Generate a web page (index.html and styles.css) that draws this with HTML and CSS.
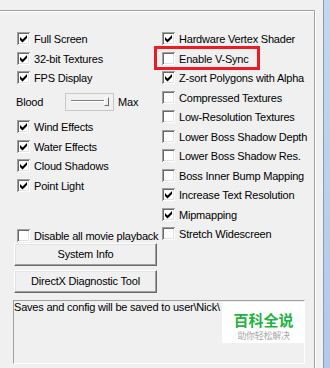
FILE: index.html
```html
<!DOCTYPE html>
<html>
<head>
<meta charset="utf-8">
<link rel="stylesheet" href="styles.css">
</head>
<body>
<div class="frame">
  <div class="group">
    <div class="cols">
      <div class="col left">
        <div class="row"><span class="cb"><svg viewBox="0 0 13 13"><path d="M3 5 L5.5 7.5 L10 3 L10 6 L5.5 10.5 L3 8 Z"/></svg></span><span class="lbl">Full Screen</span></div>
        <div class="row"><span class="cb"><svg viewBox="0 0 13 13"><path d="M3 5 L5.5 7.5 L10 3 L10 6 L5.5 10.5 L3 8 Z"/></svg></span><span class="lbl">32-bit Textures</span></div>
        <div class="row"><span class="cb"><svg viewBox="0 0 13 13"><path d="M3 5 L5.5 7.5 L10 3 L10 6 L5.5 10.5 L3 8 Z"/></svg></span><span class="lbl">FPS Display</span></div>
        <div class="blood">
          <span class="blood-lbl">Blood</span>
          <span class="slider"><span class="track"></span><span class="thumb"></span></span>
          <span class="max">Max</span>
        </div>
        <div class="row"><span class="cb"><svg viewBox="0 0 13 13"><path d="M3 5 L5.5 7.5 L10 3 L10 6 L5.5 10.5 L3 8 Z"/></svg></span><span class="lbl">Wind Effects</span></div>
        <div class="row"><span class="cb"><svg viewBox="0 0 13 13"><path d="M3 5 L5.5 7.5 L10 3 L10 6 L5.5 10.5 L3 8 Z"/></svg></span><span class="lbl">Water Effects</span></div>
        <div class="row"><span class="cb"><svg viewBox="0 0 13 13"><path d="M3 5 L5.5 7.5 L10 3 L10 6 L5.5 10.5 L3 8 Z"/></svg></span><span class="lbl">Cloud Shadows</span></div>
        <div class="row"><span class="cb"><svg viewBox="0 0 13 13"><path d="M3 5 L5.5 7.5 L10 3 L10 6 L5.5 10.5 L3 8 Z"/></svg></span><span class="lbl">Point Light</span></div>
        <div class="row disable"><span class="cb"></span><span class="lbl">Disable all movie playback</span></div>
        <button class="btn">System Info</button>
        <button class="btn second">DirectX Diagnostic Tool</button>
      </div>
      <div class="col right">
        <div class="row"><span class="cb"><svg viewBox="0 0 13 13"><path d="M3 5 L5.5 7.5 L10 3 L10 6 L5.5 10.5 L3 8 Z"/></svg></span><span class="lbl">Hardware Vertex Shader</span></div>
        <div class="row"><span class="cb"></span><span class="lbl">Enable V-Sync</span></div>
        <div class="row"><span class="cb"><svg viewBox="0 0 13 13"><path d="M3 5 L5.5 7.5 L10 3 L10 6 L5.5 10.5 L3 8 Z"/></svg></span><span class="lbl">Z-sort Polygons with Alpha</span></div>
        <div class="row"><span class="cb"></span><span class="lbl">Compressed Textures</span></div>
        <div class="row"><span class="cb"></span><span class="lbl">Low-Resolution Textures</span></div>
        <div class="row"><span class="cb"></span><span class="lbl">Lower Boss Shadow Depth</span></div>
        <div class="row"><span class="cb"></span><span class="lbl">Lower Boss Shadow Res.</span></div>
        <div class="row"><span class="cb"></span><span class="lbl">Boss Inner Bump Mapping</span></div>
        <div class="row"><span class="cb"><svg viewBox="0 0 13 13"><path d="M3 5 L5.5 7.5 L10 3 L10 6 L5.5 10.5 L3 8 Z"/></svg></span><span class="lbl">Increase Text Resolution</span></div>
        <div class="row"><span class="cb"><svg viewBox="0 0 13 13"><path d="M3 5 L5.5 7.5 L10 3 L10 6 L5.5 10.5 L3 8 Z"/></svg></span><span class="lbl">Mipmapping</span></div>
        <div class="row"><span class="cb"></span><span class="lbl">Stretch Widescreen</span></div>
      </div>
    </div>
    <div class="log">Saves and config will be saved to user\Nick\</div>
  </div>
  <div class="edge"></div>
</div>
<div class="highlight"></div>
<div class="wm">
  <div class="wm-title">百科全说</div>
  <div class="wm-sub">助你轻松解决</div>
</div>
</body>
</html>
```

FILE: styles.css
```css
* { box-sizing: border-box; margin: 0; padding: 0; }
html, body { width: 330px; height: 368px; overflow: hidden; }
body {
  background: #f0f0f0;
  font-family: "Liberation Sans", Arial, sans-serif;
  font-size: 11px;
  letter-spacing: -0.2px;
  color: #000;
  position: relative;
}
.frame { display: flex; height: 368px; }
.group {
  width: 315px;
  height: 358px;
  margin-top: 10px;
  border-top: 1px solid #a0a0a0;
  border-right: 1px solid #a0a0a0;
  box-shadow: 1px 0 0 #fff, inset 0 1px 0 #fff;
  padding: 21px 0 0 13px;
}
.cols { display: grid; grid-template-columns: 149px 1fr; }
.col { display: flex; flex-direction: column; align-items: flex-start; }
.row { display: flex; align-items: flex-start; gap: 4px; height: 13px; }
.left .row { margin-left: 4px; }
.row + .row { margin-top: 6.5px; }
.cb {
  width: 13px; height: 13px; flex: none;
  background: #fff;
  box-shadow: inset 1px 1px 0 #a0a0a0, inset -1px -1px 0 #fff,
              inset 2px 2px 0 #696969, inset -2px -2px 0 #e3e3e3;
}
.cb svg { display: block; width: 13px; height: 13px; fill: #000; }
.lbl { line-height: 13px; padding-top: 1px; white-space: nowrap; }

.blood { display: flex; align-items: center; height: 18px; margin-top: 9px; margin-left: 3px; }
.blood + .row { margin-top: 9px; }
.blood-lbl { width: 49px; line-height: 13px; padding-top: 1px; }
.slider {
  position: relative;
  width: 49px; height: 18px;
  border: 1px solid #c8c8c8;
}
.track {
  position: absolute; left: 5px; top: 6px; width: 36px; height: 2px;
  border-top: 1px solid #808080; border-bottom: 1px solid #fff;
}
.thumb {
  position: absolute; left: 38px; top: 3px; width: 5px; height: 9px;
  background: #f0f0f0;
  border-left: 1px solid #fff; border-top: 1px solid #fff;
  border-right: 1px solid #696969; border-bottom: 1px solid #696969;
}
.max { margin-left: 4px; line-height: 13px; padding-top: 1px; }

.row.disable { margin-top: 37.5px; }
.btn {
  font: inherit; letter-spacing: inherit; color: #000;
  width: 143px; height: 23px; margin-top: 1px; margin-left: 1px;
  line-height: 21px; text-align: center;
  background: #f0f0f0;
  border: 1px solid; border-color: #fff #696969 #696969 #fff;
  box-shadow: inset -1px -1px 0 #a0a0a0, inset 1px 1px 0 #e3e3e3;
}
.btn.second { margin-top: 4px; }

.log {
  width: 292px; height: 64px; margin-top: 7px;
  border: 1px solid; border-color: #a0a0a0 #fff #fff #a0a0a0;
  line-height: 13px; white-space: nowrap; overflow: hidden;
}
.edge {
  flex: 1; margin-left: 8px;
  border-left: 1px solid #8c9bb0;
  background: linear-gradient(#c4d7ee, #b3c9e4);
}

.highlight {
  position: absolute; left: 154px; top: 46px; width: 106px; height: 24px;
  border: 3px solid #ec1c24;
}
.wm {
  position: absolute; left: 222px; top: 302px; width: 83px; height: 41px;
  background: #fff;
  display: flex; flex-direction: column; align-items: center;
  padding-top: 10px;
  font-family: "Noto Sans CJK SC", sans-serif;
  letter-spacing: 0;
}
.wm-title { font-size: 15px; line-height: 15px; font-weight: 700; color: #21b33f; }
.wm-sub { font-size: 9px; line-height: 9px; margin-top: 4px; color: #a8a8a8; letter-spacing: -0.3px; }
```
